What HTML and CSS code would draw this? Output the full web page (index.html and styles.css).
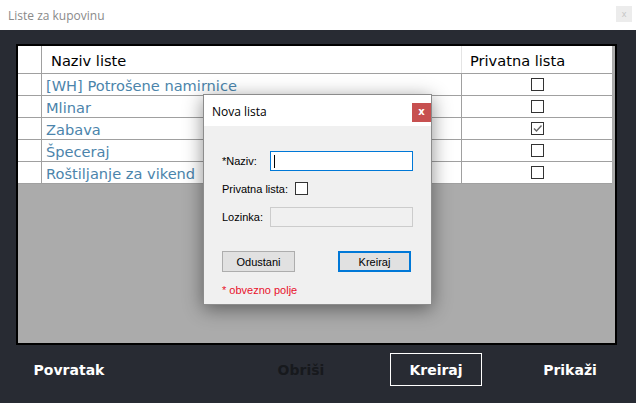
FILE: index.html
```html
<!DOCTYPE html>
<html>
<head>
<meta charset="utf-8">
<link rel="stylesheet" href="styles.css">
</head>
<body>
<div class="app">
  <div class="titlebar">
    <span class="app-title">Liste za kupovinu</span>
    <span class="app-close">x</span>
  </div>
  <div class="main">
    <div class="panel">
      <div class="grid">
        <div class="row head">
          <div class="rh"></div>
          <div class="c-name">Naziv liste</div>
          <div class="c-priv">Privatna lista</div>
        </div>
        <div class="row">
          <div class="rh"></div>
          <div class="c-name">[WH] Potrošene namirnice</div>
          <div class="c-priv"><span class="cb"></span></div>
        </div>
        <div class="row">
          <div class="rh"></div>
          <div class="c-name">Mlinar</div>
          <div class="c-priv"><span class="cb"></span></div>
        </div>
        <div class="row">
          <div class="rh"></div>
          <div class="c-name">Zabava</div>
          <div class="c-priv"><span class="cb"><svg width="11" height="11" viewBox="0 0 11 11"><path d="M2 5.5 L4.5 8 L9.5 2.5" fill="none" stroke="#666" stroke-width="1.4"/></svg></span></div>
        </div>
        <div class="row">
          <div class="rh"></div>
          <div class="c-name">Špeceraj</div>
          <div class="c-priv"><span class="cb"></span></div>
        </div>
        <div class="row">
          <div class="rh"></div>
          <div class="c-name">Roštiljanje za vikend</div>
          <div class="c-priv"><span class="cb"></span></div>
        </div>
      </div>
    </div>
    <div class="actions">
      <div class="act act-back">Povratak</div>
      <div class="act act-del">Obriši</div>
      <div class="act act-new">Kreiraj</div>
      <div class="act act-show">Prikaži</div>
    </div>
  </div>

  <div class="dialog">
    <div class="dlg-title">
      <span>Nova lista</span>
      <span class="dlg-close">x</span>
    </div>
    <div class="dlg-body">
      <div class="field f-name">
        <label>*Naziv:</label>
        <div class="input focus"><span class="caret"></span></div>
      </div>
      <div class="field f-priv">
        <label>Privatna lista:</label>
        <span class="dcb"></span>
      </div>
      <div class="field f-pass">
        <label>Lozinka:</label>
        <div class="input disabled"></div>
      </div>
      <div class="btns">
        <div class="btn">Odustani</div>
        <div class="btn primary">Kreiraj</div>
      </div>
      <div class="req">* obvezno polje</div>
    </div>
  </div>
</div>
</body>
</html>
```
FILE: styles.css
```css
* { box-sizing: border-box; }
html, body { margin: 0; padding: 0; }
body { width: 636px; height: 403px; overflow: hidden; background: #282b33; }
.app { position: relative; width: 636px; height: 403px; display: flex; flex-direction: column; }

.titlebar {
  height: 30px; background: #fff; display: flex; align-items: flex-start;
  font-family: "Open Sans", "Noto Sans", sans-serif; font-size: 12px; color: #8a8a8a;
}
.app-title { padding: 7px 0 0 8px; }
.app-close {
  margin-left: auto; margin-right: 4px; margin-top: 6px;
  width: 16px; height: 16px; background: #ececec; color: #c4c4c4;
  font-size: 9px; line-height: 15px; text-align: center;
}

.main { flex: 1; background: #282b33; padding: 14px 19px 0 16px; display: flex; flex-direction: column; }
.panel {
  height: 301px; border: 2px solid #000; background: #ababab;
}
.grid { width: 594px; background: #fff; font-family: "DejaVu Sans", sans-serif; font-size: 14.6px; }
.row { display: flex; height: 22px; border-bottom: 1px solid #a0a0a0; }
.row.head { height: 28px; }
.rh { width: 24px; border-right: 1px solid #a0a0a0; }
.c-name { width: 420px; border-right: 1px solid #a0a0a0; padding: 1px 0 0 4px; color: #4b84ab; line-height: 21px; white-space: nowrap; }
.c-priv { flex: 1; display: flex; align-items: center; justify-content: center; }
.head .c-name { color: #000; padding: 2px 0 0 9px; line-height: 26px; border-right-color: #e4e4e4; }
.head .c-priv { justify-content: flex-start; padding: 2px 0 0 8px; color: #000; }
.head .rh { border-right-color: #a0a0a0; }
.cb { width: 13px; height: 13px; border: 1px solid #333; background: #fff; display: flex; align-items: center; justify-content: center; }

.actions { display: flex; height: 58px; padding-top: 8px; font-family: "DejaVu Sans", sans-serif; font-weight: bold; font-size: 14px; }
.act { width: 92px; height: 33px; display: flex; align-items: center; justify-content: center; color: #fff; }
.act-back { margin-left: 7px; }
.act-del { margin-left: 140px; color: #17191d; }
.act-new { margin-left: 43px; border: 1px solid #fff; }
.act-show { margin-left: 42px; }

.dialog {
  position: absolute; left: 203px; top: 94px; width: 229px; height: 211px;
  background: #f0f0f0; border: 1px solid #8c8c8c;
  box-shadow: 0 4px 18px rgba(0,0,0,0.45);
  font-family: "Liberation Sans", Arial, sans-serif; font-size: 11px; color: #000;
}
.dlg-title {
  height: 31px; background: #fff; display: flex; align-items: flex-start;
  font-family: "Open Sans", "Noto Sans", sans-serif; font-size: 12px;
}
.dlg-title span:first-child { padding: 8px 0 0 8px; }
.dlg-close {
  margin-left: auto; margin-top: 8px; width: 19px; height: 19px; background: #c75050; color: #fff;
  font-family: "DejaVu Sans", sans-serif; font-weight: bold; font-size: 10px; line-height: 18px; text-align: center;
}
.dlg-body { padding: 25px 0 0 18px; }
.field { display: flex; align-items: center; }
.field label { width: 48px; }
.f-name { height: 20px; }
.f-priv { margin-top: 11px; height: 13px; }
.f-priv label { width: 73px; }
.f-pass { margin-top: 12px; height: 20px; }
.input { width: 143px; height: 20px; background: #fff; border: 1px solid #7a7a7a; }
.input.focus { border-color: #0078d7; padding: 3px 0 0 3px; }
.caret { display: block; width: 1px; height: 13px; background: #000; }
.input.disabled { background: #f0f0f0; border-color: #cccccc; }
.dcb { width: 13px; height: 13px; border: 1px solid #333; background: #fff; }
.btns { display: flex; margin-top: 24px; height: 21px; }
.btn { width: 73px; height: 21px; background: #e1e1e1; border: 1px solid #adadad; display: flex; align-items: center; justify-content: center; }
.btn.primary { margin-left: 43px; border: 2px solid #0078d7; }
.req { margin-top: 12px; color: #e8102c; }
```
